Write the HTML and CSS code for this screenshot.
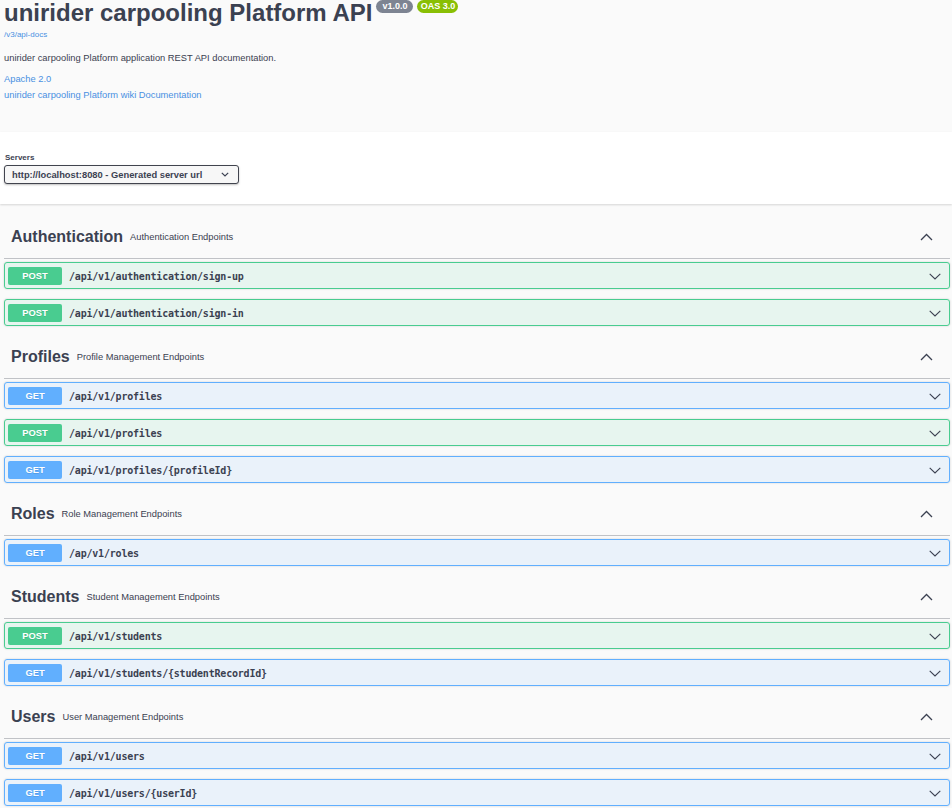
FILE: index.html
```html
<!DOCTYPE html>
<html lang="en">
<head>
<meta charset="utf-8">
<title>unirider carpooling Platform API</title>
<link rel="stylesheet" href="styles.css">
</head>
<body>
<div class="page">
  <section class="info">
    <div class="title-row">
      <h2 class="title">unirider carpooling Platform API</h2>
      <span class="stamp stamp-version">v1.0.0</span>
      <span class="stamp stamp-oas">OAS 3.0</span>
    </div>
    <a class="spec-url" href="#">/v3/api-docs</a>
    <p class="description">unirider carpooling Platform application REST API documentation.</p>
    <a class="license" href="#">Apache 2.0</a>
    <a class="docs-link" href="#">unirider carpooling Platform wiki Documentation</a>
  </section>

  <section class="schemes">
    <span class="servers-label">Servers</span>
    <div class="server-select">
      <span>http://localhost:8080 - Generated server url</span>
      <svg class="select-arrow" width="8" height="5" viewBox="0 0 8 5"><polyline points="0.8,0.8 4,4 7.2,0.8" fill="none" stroke="#3b4151" stroke-width="1.2"/></svg>
    </div>
  </section>

  <div class="operations">
    <section class="tag-section">
      <h3 class="tag"><span class="tag-name">Authentication</span><small class="tag-desc">Authentication Endpoints</small><svg class="arrow-up" width="13" height="8" viewBox="0 0 13 8"><polyline points="1,7 6.5,1.5 12,7" fill="none" stroke="#3b4151" stroke-width="1.3"/></svg></h3>
      <div class="opblock post"><span class="method">POST</span><span class="path">/api/v1/authentication/sign-up</span><svg class="arrow-down" width="12" height="7" viewBox="0 0 12 7"><polyline points="0.7,0.8 6,6 11.3,0.8" fill="none" stroke="#3b4151" stroke-width="1.1"/></svg></div>
      <div class="opblock post"><span class="method">POST</span><span class="path">/api/v1/authentication/sign-in</span><svg class="arrow-down" width="12" height="7" viewBox="0 0 12 7"><polyline points="0.7,0.8 6,6 11.3,0.8" fill="none" stroke="#3b4151" stroke-width="1.1"/></svg></div>
    </section>

    <section class="tag-section">
      <h3 class="tag"><span class="tag-name">Profiles</span><small class="tag-desc">Profile Management Endpoints</small><svg class="arrow-up" width="13" height="8" viewBox="0 0 13 8"><polyline points="1,7 6.5,1.5 12,7" fill="none" stroke="#3b4151" stroke-width="1.3"/></svg></h3>
      <div class="opblock get"><span class="method">GET</span><span class="path">/api/v1/profiles</span><svg class="arrow-down" width="12" height="7" viewBox="0 0 12 7"><polyline points="0.7,0.8 6,6 11.3,0.8" fill="none" stroke="#3b4151" stroke-width="1.1"/></svg></div>
      <div class="opblock post"><span class="method">POST</span><span class="path">/api/v1/profiles</span><svg class="arrow-down" width="12" height="7" viewBox="0 0 12 7"><polyline points="0.7,0.8 6,6 11.3,0.8" fill="none" stroke="#3b4151" stroke-width="1.1"/></svg></div>
      <div class="opblock get"><span class="method">GET</span><span class="path">/api/v1/profiles/{profileId}</span><svg class="arrow-down" width="12" height="7" viewBox="0 0 12 7"><polyline points="0.7,0.8 6,6 11.3,0.8" fill="none" stroke="#3b4151" stroke-width="1.1"/></svg></div>
    </section>

    <section class="tag-section">
      <h3 class="tag"><span class="tag-name">Roles</span><small class="tag-desc">Role Management Endpoints</small><svg class="arrow-up" width="13" height="8" viewBox="0 0 13 8"><polyline points="1,7 6.5,1.5 12,7" fill="none" stroke="#3b4151" stroke-width="1.3"/></svg></h3>
      <div class="opblock get"><span class="method">GET</span><span class="path">/ap/v1/roles</span><svg class="arrow-down" width="12" height="7" viewBox="0 0 12 7"><polyline points="0.7,0.8 6,6 11.3,0.8" fill="none" stroke="#3b4151" stroke-width="1.1"/></svg></div>
    </section>

    <section class="tag-section">
      <h3 class="tag"><span class="tag-name">Students</span><small class="tag-desc">Student Management Endpoints</small><svg class="arrow-up" width="13" height="8" viewBox="0 0 13 8"><polyline points="1,7 6.5,1.5 12,7" fill="none" stroke="#3b4151" stroke-width="1.3"/></svg></h3>
      <div class="opblock post"><span class="method">POST</span><span class="path">/api/v1/students</span><svg class="arrow-down" width="12" height="7" viewBox="0 0 12 7"><polyline points="0.7,0.8 6,6 11.3,0.8" fill="none" stroke="#3b4151" stroke-width="1.1"/></svg></div>
      <div class="opblock get"><span class="method">GET</span><span class="path">/api/v1/students/{studentRecordId}</span><svg class="arrow-down" width="12" height="7" viewBox="0 0 12 7"><polyline points="0.7,0.8 6,6 11.3,0.8" fill="none" stroke="#3b4151" stroke-width="1.1"/></svg></div>
    </section>

    <section class="tag-section">
      <h3 class="tag"><span class="tag-name">Users</span><small class="tag-desc">User Management Endpoints</small><svg class="arrow-up" width="13" height="8" viewBox="0 0 13 8"><polyline points="1,7 6.5,1.5 12,7" fill="none" stroke="#3b4151" stroke-width="1.3"/></svg></h3>
      <div class="opblock get"><span class="method">GET</span><span class="path">/api/v1/users</span><svg class="arrow-down" width="12" height="7" viewBox="0 0 12 7"><polyline points="0.7,0.8 6,6 11.3,0.8" fill="none" stroke="#3b4151" stroke-width="1.1"/></svg></div>
      <div class="opblock get"><span class="method">GET</span><span class="path">/api/v1/users/{userId}</span><svg class="arrow-down" width="12" height="7" viewBox="0 0 12 7"><polyline points="0.7,0.8 6,6 11.3,0.8" fill="none" stroke="#3b4151" stroke-width="1.1"/></svg></div>
    </section>
  </div>
</div>
</body>
</html>
```

FILE: styles.css
```css
html, body {
  margin: 0;
  padding: 0;
  background: #fafafa;
  color: #3b4151;
  font-family: "Liberation Sans", Arial, sans-serif;
}

.page {
  width: 952px;
  overflow: hidden;
}

/* ---------- info header ---------- */
.info {
  display: flex;
  flex-direction: column;
  align-items: flex-start;
  padding: 0 4px 30px 4px;
  background: #fafafa;
}

.title-row {
  display: flex;
  align-items: flex-start;
}

.title {
  margin: 0;
  font-size: 24px;
  line-height: 26px;
  font-weight: 700;
  color: #3b4151;
}

.stamp {
  display: inline-block;
  height: 13px;
  line-height: 13px;
  font-size: 9px;
  font-weight: 700;
  color: #fff;
  text-align: center;
  border-radius: 57px;
}

.stamp-version {
  width: 37px;
  margin-left: 4px;
  background: #7d8492;
}

.stamp-oas {
  width: 41px;
  margin-left: 4px;
  background: #89bf04;
}

.spec-url {
  margin-top: 2px;
  font-size: 8px;
  line-height: 14px;
  color: #4990e2;
  text-decoration: none;
}

.description {
  margin: 9px 0 0;
  font-size: 9.33px;
  line-height: 14px;
  color: #3b4151;
}

.license {
  margin-top: 7px;
  font-size: 9.33px;
  line-height: 14px;
  color: #4990e2;
  text-decoration: none;
}

.docs-link {
  margin-top: 2px;
  font-size: 9.33px;
  line-height: 14px;
  color: #4990e2;
  text-decoration: none;
}

/* ---------- servers ---------- */
.schemes {
  display: flex;
  flex-direction: column;
  align-items: flex-start;
  padding: 20px 4px;
  background: #fff;
  box-shadow: 0 1px 2px 0 rgba(0, 0, 0, 0.15);
  position: relative;
}

.servers-label {
  font-size: 8px;
  line-height: 11px;
  font-weight: 700;
  color: #3b4151;
  padding-left: 1px;
}

.server-select {
  margin-top: 2px;
  box-sizing: border-box;
  width: 235px;
  height: 19px;
  display: flex;
  align-items: center;
  justify-content: space-between;
  padding: 0 9px 0 7px;
  border: 1px solid #41444e;
  border-radius: 3px;
  box-shadow: 0 1px 2px 0 rgba(0, 0, 0, 0.25);
  background: #f7f7f7;
  font-size: 9.33px;
  font-weight: 700;
  color: #3b4151;
}

.select-arrow {
  display: block;
}

/* ---------- operations ---------- */
.operations {
  padding: 12px 2px 0 4px;
}

.tag {
  box-sizing: border-box;
  display: flex;
  align-items: center;
  height: 43px;
  margin: 0 0 3px;
  padding: 0 17px 0 7px;
  border-bottom: 1px solid rgba(59, 65, 81, 0.3);
  font-size: 16px;
  font-weight: 700;
  color: #3b4151;
}

.tag-desc {
  flex: 1;
  margin-left: 7px;
  font-size: 9.33px;
  font-weight: 400;
  color: #3b4151;
}

.arrow-up {
  display: block;
}

.opblock {
  box-sizing: border-box;
  display: flex;
  align-items: center;
  height: 27px;
  margin: 0 0 10px;
  padding: 1px 3px 0 3px;
  border: 1px solid;
  border-radius: 3px;
  box-shadow: 0 0 2px rgba(0, 0, 0, 0.19);
}

.opblock.post {
  background: rgba(73, 204, 144, 0.1);
  border-color: #49cc90;
}

.opblock.get {
  background: rgba(97, 175, 254, 0.1);
  border-color: #61affe;
}

.method {
  width: 54px;
  height: 18px;
  line-height: 18px;
  border-radius: 2px;
  text-align: center;
  font-size: 9.33px;
  font-weight: 700;
  color: #fff;
  text-shadow: 0 1px 0 rgba(0, 0, 0, 0.1);
}

.post .method {
  background: #49cc90;
}

.get .method {
  background: #61affe;
}

.path {
  flex: 1;
  margin-left: 7px;
  font-family: "DejaVu Sans Mono", "Liberation Mono", monospace;
  font-size: 10px;
  letter-spacing: -0.2px;
  font-weight: 700;
  color: #3b4151;
}

.arrow-down {
  display: block;
  margin-right: 5px;
}
```
